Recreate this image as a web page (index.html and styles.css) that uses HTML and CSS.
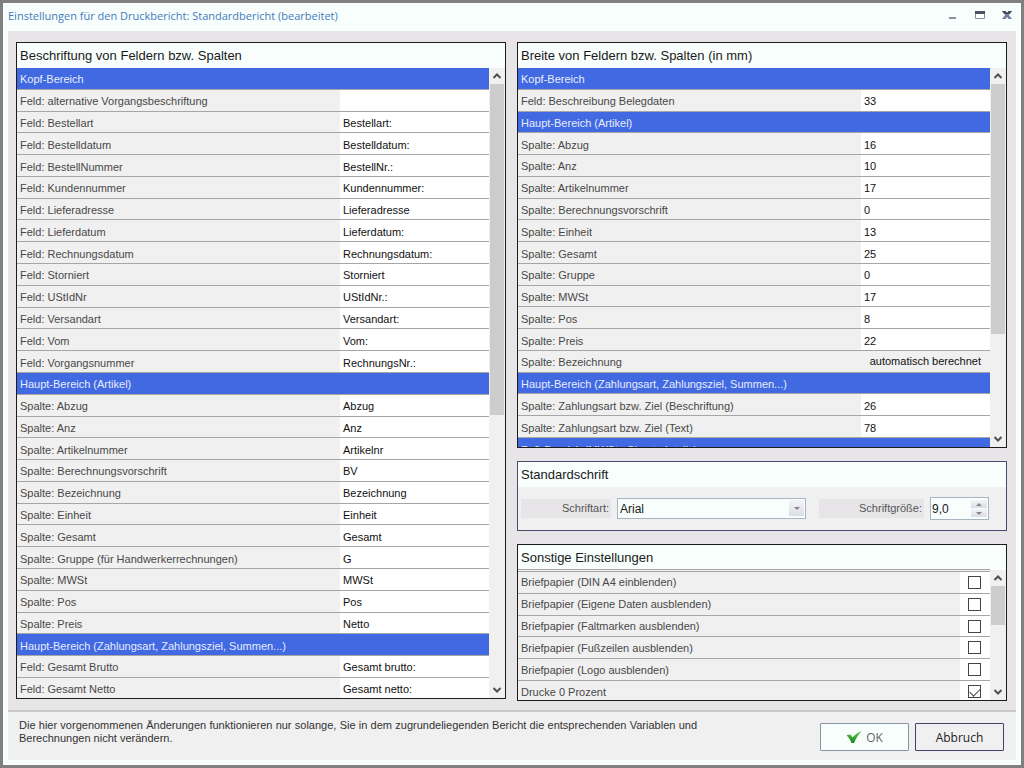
FILE: index.html
```html
<!DOCTYPE html>
<html lang="de">
<head>
<meta charset="utf-8">
<title>Einstellungen für den Druckbericht</title>
<link rel="stylesheet" href="styles.css">
</head>
<body>
<div class="window">
  <header class="titlebar">
    <h1 class="title">Einstellungen für den Druckbericht: Standardbericht (bearbeitet)</h1>
    <div class="window-buttons">
      <button class="window-button" aria-label="Minimieren"><svg width="10" height="10"><rect x="1" y="7" width="7" height="2" fill="#8b93a0"/></svg></button>
      <button class="window-button" aria-label="Maximieren"><svg width="10" height="10"><path d="M.5 1.500h9v7h-9z" fill="#fff" stroke="#8791ab"/><rect y="1" width="10" height="3" fill="#4b5263"/></svg></button>
      <button class="window-button" aria-label="Schließen"><svg width="10" height="10"><path d="M0 1h3.500L5 3 6.500 1H10L6.800 5 10 9H6.500L5 7 3.500 9H0L3.200 5z" fill="#7380a0"/><path d="M0 1h3.500L5 3 6.500 1H10L7.600 4H2.400z" fill="#454a58"/></svg></button>
    </div>
  </header>

  <main class="content">
    <section class="panel">
      <h2 class="panel-title">Beschriftung von Feldern bzw. Spalten</h2>
      <div class="list list-labels">
        <div class="viewport">
          <table class="grid grid-labels">
            <colgroup><col><col class="col-label-value"></colgroup>
            <tbody>
              <tr class="group"><th colspan="2">Kopf-Bereich</th></tr>
              <tr><th>Feld: alternative Vorgangsbeschriftung</th><td></td></tr>
              <tr><th>Feld: Bestellart</th><td>Bestellart:</td></tr>
              <tr><th>Feld: Bestelldatum</th><td>Bestelldatum:</td></tr>
              <tr><th>Feld: BestellNummer</th><td>BestellNr.:</td></tr>
              <tr><th>Feld: Kundennummer</th><td>Kundennummer:</td></tr>
              <tr><th>Feld: Lieferadresse</th><td>Lieferadresse</td></tr>
              <tr><th>Feld: Lieferdatum</th><td>Lieferdatum:</td></tr>
              <tr><th>Feld: Rechnungsdatum</th><td>Rechnungsdatum:</td></tr>
              <tr><th>Feld: Storniert</th><td>Storniert</td></tr>
              <tr><th>Feld: UStIdNr</th><td>UStIdNr.:</td></tr>
              <tr><th>Feld: Versandart</th><td>Versandart:</td></tr>
              <tr><th>Feld: Vom</th><td>Vom:</td></tr>
              <tr><th>Feld: Vorgangsnummer</th><td>RechnungsNr.:</td></tr>
              <tr class="group"><th colspan="2">Haupt-Bereich (Artikel)</th></tr>
              <tr><th>Spalte: Abzug</th><td>Abzug</td></tr>
              <tr><th>Spalte: Anz</th><td>Anz</td></tr>
              <tr><th>Spalte: Artikelnummer</th><td>Artikelnr</td></tr>
              <tr><th>Spalte: Berechnungsvorschrift</th><td>BV</td></tr>
              <tr><th>Spalte: Bezeichnung</th><td>Bezeichnung</td></tr>
              <tr><th>Spalte: Einheit</th><td>Einheit</td></tr>
              <tr><th>Spalte: Gesamt</th><td>Gesamt</td></tr>
              <tr><th>Spalte: Gruppe (für Handwerkerrechnungen)</th><td>G</td></tr>
              <tr><th>Spalte: MWSt</th><td>MWSt</td></tr>
              <tr><th>Spalte: Pos</th><td>Pos</td></tr>
              <tr><th>Spalte: Preis</th><td>Netto</td></tr>
              <tr class="group"><th colspan="2">Haupt-Bereich (Zahlungsart, Zahlungsziel, Summen...)</th></tr>
              <tr><th>Feld: Gesamt Brutto</th><td>Gesamt brutto:</td></tr>
              <tr><th>Feld: Gesamt Netto</th><td>Gesamt netto:</td></tr>
            </tbody>
          </table>
        </div>
        <div class="scrollbar">
          <button class="scroll-button" aria-label="Nach oben"><svg width="10" height="8"><path d="M1.500 6 5 2.500 8.500 6" fill="none" stroke="#505050" stroke-width="2"/></svg></button>
          <div class="track"><div class="thumb thumb-labels"></div></div>
          <button class="scroll-button" aria-label="Nach unten"><svg width="10" height="8"><path d="M1.500 2 5 5.500 8.500 2" fill="none" stroke="#505050" stroke-width="2"/></svg></button>
        </div>
      </div>
    </section>

    <div class="side">
      <section class="panel">
        <h2 class="panel-title">Breite von Feldern bzw. Spalten (in mm)</h2>
        <div class="list list-widths">
          <div class="viewport">
            <table class="grid grid-widths">
              <colgroup><col><col class="col-width-value"></colgroup>
              <tbody>
                <tr class="group"><th colspan="2">Kopf-Bereich</th></tr>
                <tr><th>Feld: Beschreibung Belegdaten</th><td>33</td></tr>
                <tr class="group"><th colspan="2">Haupt-Bereich (Artikel)</th></tr>
                <tr><th>Spalte: Abzug</th><td>16</td></tr>
                <tr><th>Spalte: Anz</th><td>10</td></tr>
                <tr><th>Spalte: Artikelnummer</th><td>17</td></tr>
                <tr><th>Spalte: Berechnungsvorschrift</th><td>0</td></tr>
                <tr><th>Spalte: Einheit</th><td>13</td></tr>
                <tr><th>Spalte: Gesamt</th><td>25</td></tr>
                <tr><th>Spalte: Gruppe</th><td>0</td></tr>
                <tr><th>Spalte: MWSt</th><td>17</td></tr>
                <tr><th>Spalte: Pos</th><td>8</td></tr>
                <tr><th>Spalte: Preis</th><td>22</td></tr>
                <tr><th>Spalte: Bezeichnung</th><td class="computed">automatisch berechnet</td></tr>
                <tr class="group"><th colspan="2">Haupt-Bereich (Zahlungsart, Zahlungsziel, Summen...)</th></tr>
                <tr><th>Spalte: Zahlungsart bzw. Ziel (Beschriftung)</th><td>26</td></tr>
                <tr><th>Spalte: Zahlungsart bzw. Ziel (Text)</th><td>78</td></tr>
                <tr class="group"><th colspan="2">Fuß-Bereich (MWSt., Skontodetails)</th></tr>
              </tbody>
            </table>
          </div>
          <div class="scrollbar">
            <button class="scroll-button" aria-label="Nach oben"><svg width="10" height="8"><path d="M1.500 6 5 2.500 8.500 6" fill="none" stroke="#505050" stroke-width="2"/></svg></button>
            <div class="track"><div class="thumb thumb-widths"></div></div>
            <button class="scroll-button" aria-label="Nach unten"><svg width="10" height="8"><path d="M1.500 2 5 5.500 8.500 2" fill="none" stroke="#505050" stroke-width="2"/></svg></button>
          </div>
        </div>
      </section>

      <section class="panel panel-font">
        <h2 class="panel-title">Standardschrift</h2>
        <div class="font-row">
          <label class="font-label" for="font-name">Schriftart:</label>
          <div class="combo">
            <select id="font-name" class="combo-select"><option>Arial</option></select>
            <svg class="combo-arrow" width="15" height="16" aria-hidden="true"><path d="M5 7h6L8 10z" fill="#858585"/></svg>
          </div>
          <label class="font-label" for="font-size">Schriftgröße:</label>
          <div class="spinner">
            <input id="font-size" class="spinner-input" type="text" value="9,0">
            <div class="spinner-buttons">
              <button class="spinner-button" aria-label="Größer"><svg width="6" height="3"><path d="M0 3h6L3 0z" fill="#858585"/></svg></button>
              <button class="spinner-button" aria-label="Kleiner"><svg width="6" height="3"><path d="M0 0h6L3 3z" fill="#858585"/></svg></button>
            </div>
          </div>
        </div>
      </section>

      <section class="panel">
        <h2 class="panel-title">Sonstige Einstellungen</h2>
        <div class="list list-options">
          <div class="viewport viewport-options">
            <table class="grid grid-options">
              <colgroup><col><col class="col-option-value"></colgroup>
              <tbody>
                <tr><th><label for="o1">Briefpapier (DIN A4 einblenden)</label></th><td><input class="check" type="checkbox" id="o1"></td></tr>
                <tr><th><label for="o2">Briefpapier (Eigene Daten ausblenden)</label></th><td><input class="check" type="checkbox" id="o2"></td></tr>
                <tr><th><label for="o3">Briefpapier (Faltmarken ausblenden)</label></th><td><input class="check" type="checkbox" id="o3"></td></tr>
                <tr><th><label for="o4">Briefpapier (Fußzeilen ausblenden)</label></th><td><input class="check" type="checkbox" id="o4"></td></tr>
                <tr><th><label for="o5">Briefpapier (Logo ausblenden)</label></th><td><input class="check" type="checkbox" id="o5"></td></tr>
                <tr><th><label for="o6">Drucke 0 Prozent</label></th><td><input class="check" type="checkbox" id="o6" checked></td></tr>
              </tbody>
            </table>
          </div>
          <div class="scrollbar">
            <button class="scroll-button" aria-label="Nach oben"><svg width="10" height="8"><path d="M1.500 6 5 2.500 8.500 6" fill="none" stroke="#505050" stroke-width="2"/></svg></button>
            <div class="track"><div class="thumb thumb-options"></div></div>
            <button class="scroll-button" aria-label="Nach unten"><svg width="10" height="8"><path d="M1.500 2 5 5.500 8.500 2" fill="none" stroke="#505050" stroke-width="2"/></svg></button>
          </div>
        </div>
      </section>
    </div>
  </main>

  <footer class="footer">
    <p class="note">Die hier vorgenommenen Änderungen funktionieren nur solange, Sie in dem zugrundeliegenden Bericht die entsprechenden Variablen und Berechnungen nicht verändern.</p>
    <div class="actions">
      <button class="button button-ok"><svg width="16" height="16" viewBox="0 0 16 16" aria-hidden="true"><defs><linearGradient id="tick" x1="0" y1="0" x2="0" y2="1"><stop offset="0" stop-color="#62c84f"/><stop offset="1" stop-color="#118a18"/></linearGradient></defs><path d="M.5 6 4.500 5.500 6.500 8.500C9 5.500 12 3.500 15.500 2 12 6 10 9.500 8 14H5.500C4.500 11 2.500 8.500.5 6z" fill="url(#tick)"/></svg>OK</button>
      <button class="button">Abbruch</button>
    </div>
  </footer>
</div>
</body>
</html>
```
FILE: styles.css
```css
* { box-sizing: border-box; }

body {
  margin: 0;
  font-family: "Liberation Sans", Arial, sans-serif;
  font-size: 11px;
  color: #1a1a1a;
}

button { font: inherit; padding: 0; border: 0; background: none; }
svg { display: block; }

.window {
  display: flex;
  flex-direction: column;
  min-height: 100vh;
  padding: 0 5px 5px;
  border: 3px solid #808080;
  background: #f7fefc;
}

.titlebar {
  display: flex;
  justify-content: space-between;
  align-items: center;
  height: 28px;
  padding-bottom: 4px;
}
.title {
  margin: 0;
  font: 11px "Open Sans", sans-serif;
  color: #427bbd;
}
.window-buttons { display: flex; gap: 17px; padding-right: 4px; }
.window-button { width: 10px; height: 10px; }

.content {
  display: grid;
  grid-template-columns: 1fr 1fr;
  align-items: start;
  gap: 11px;
  flex: 1;
  padding: 11px 9px 9px 8px;
  background: #e7e5e8;
}
.side { display: flex; flex-direction: column; gap: 13px; }

.panel { border: 1px solid #1c1c1c; background: #f0f0f0; }
.panel-font { border-color: #4b4b6b; }
.panel-title {
  height: 25px;
  margin: 0;
  padding-left: 3px;
  font-size: 13px;
  font-weight: 400;
  line-height: 26px;
  background: #f7fefc;
}

.list { display: flex; }
.list-labels { height: 630px; }
.list-widths { height: 379px; }
.list-options { height: 130px; }
.viewport { flex: 1; overflow: hidden; }
.viewport-options { margin-top: -1px; border-top: 1px solid #a6a6a6; padding-top: 1px; }

.grid {
  width: 100%;
  table-layout: fixed;
  border-collapse: separate;
  border-spacing: 0;
}
.grid-labels { height: 632px; }
.grid-widths { height: 392px; }
.grid-options { height: 132px; border-top: 1px solid #a6a6a6; }
.grid th, .grid td {
  padding: 2px 3px 0;
  border-bottom: 1px solid #a6a6a6;
  text-align: left;
  font-weight: 400;
  line-height: 16px;
  white-space: nowrap;
}
.grid th { color: #484848; }
.grid td { background: #fff; color: #111; }
.grid .group th { background: #4169e1; color: #e8edff; }
.grid-options th { padding-top: 0; }
.grid-options td { padding: 0 0 0 8px; }
.grid .computed { background: #f0f0f0; text-align: right; padding: 0 9px 0 0; }
.col-label-value { width: 149px; }
.col-width-value { width: 129px; }
.col-option-value { width: 30px; }

.check {
  appearance: none;
  display: block;
  width: 13px;
  height: 13px;
  margin: 0;
  border: 1px solid #444;
  background: #fff;
}
.check:checked::before {
  content: "";
  display: block;
  width: 9px;
  height: 5px;
  margin: 2px 0 0 1px;
  border: solid #444;
  border-width: 0 0 1px 1px;
  transform: rotate(-45deg);
}

.scrollbar { display: flex; flex-direction: column; width: 16px; }
.scroll-button { display: grid; place-items: center; height: 16px; }
.track { flex: 1; }
.thumb { margin: 0 1px; background: #cdcdcd; }
.thumb-labels { height: 331px; }
.thumb-widths { height: 250px; }
.thumb-options { height: 39px; }

.font-row {
  display: grid;
  grid-template-columns: 90fr 196fr 105fr 59fr;
  align-items: center;
  column-gap: 6px;
  height: 43px;
  padding: 0 17px 0 3px;
}
.font-label {
  padding-right: 2px;
  background: #e7e5e8;
  color: #555;
  line-height: 19px;
  text-align: right;
}
.combo { position: relative; margin-right: 7px; }
.combo-select {
  display: block;
  appearance: none;
  width: 100%;
  height: 21px;
  padding: 0 2px;
  border: 1px solid #a9b4c2;
  border-radius: 0;
  background: #f7fefc;
  font: 12px "Liberation Sans", Arial, sans-serif;
  color: #1a1a1a;
}
.combo-arrow {
  position: absolute;
  top: 2px;
  right: 2px;
  background: linear-gradient(#f4f4f8, #dcdce6);
  pointer-events: none;
}
.spinner {
  display: flex;
  align-items: center;
  min-width: 0;
  height: 23px;
  padding-right: 1px;
  border: 1px solid #a9b4c2;
  background: #f7fefc;
}
.spinner-input {
  flex: 1;
  width: 0;
  min-width: 0;
  padding: 0 1px;
  border: 0;
  background: none;
  font: 12px "Liberation Sans", Arial, sans-serif;
  color: #1a1a1a;
}
.spinner-buttons { display: grid; gap: 1px; width: 16px; }
.spinner-button {
  display: grid;
  place-items: center;
  height: 8px;
  background: linear-gradient(#f4f4f8, #dcdce6);
}

.footer {
  display: flex;
  justify-content: space-between;
  align-items: flex-start;
  border-top: 2px solid #c9c9c9;
  height: 50px;
  padding: 7px 12px 0 11px;
  background: #f0f0f0;
}
.note { width: 678px; margin: 0; line-height: 13px; text-align: justify; color: #333; }
.actions { display: flex; gap: 6px; padding-top: 4px; }
.button {
  display: flex;
  justify-content: center;
  align-items: center;
  gap: 4px;
  width: 89px;
  height: 28px;
  border: 1px solid #44406a;
  border-radius: 1px;
  font: 12px "Open Sans", sans-serif;
  color: #222;
}
.button-ok { border-color: #8795a3; background: #f7fefc; color: #666; }
```
